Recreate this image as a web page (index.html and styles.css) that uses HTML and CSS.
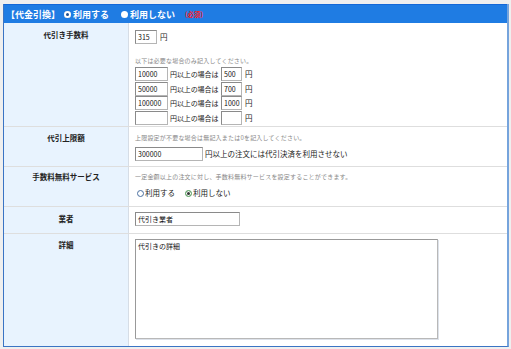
FILE: index.html
```html
<!DOCTYPE html>
<html lang="ja">
<head>
<meta charset="utf-8">
<link rel="stylesheet" href="styles.css">
</head>
<body>
<div class="panel">
  <div class="head">
    <span class="title">【代金引換】</span>
    <span class="hradio on"></span><span class="hopt">利用する</span>
    <span class="hradio"></span><span class="hopt">利用しない</span>
    <span class="req">(必須)</span>
  </div>
  <div class="row r1">
    <div class="label">代引き手数料</div>
    <div class="val">
      <div class="line"><span class="inp w22">315</span><span class="yen">円</span></div>
      <div class="note n1">以下は必要な場合のみ記入してください。</div>
      <div class="tiers">
        <div class="tier"><span class="inp w33">10000</span><span class="mid">円以上の場合は</span><span class="inp w21">500</span><span class="yen">円</span></div>
        <div class="tier"><span class="inp w33">50000</span><span class="mid">円以上の場合は</span><span class="inp w21">700</span><span class="yen">円</span></div>
        <div class="tier"><span class="inp w33">100000</span><span class="mid">円以上の場合は</span><span class="inp w21">1000</span><span class="yen">円</span></div>
        <div class="tier"><span class="inp w33"></span><span class="mid">円以上の場合は</span><span class="inp w21"></span><span class="yen">円</span></div>
      </div>
    </div>
  </div>
  <div class="row r2">
    <div class="label">代引上限額</div>
    <div class="val">
      <div class="note">上限設定が不要な場合は無記入または0を記入してください。</div>
      <div class="line l2"><span class="inp w68">300000</span><span class="txt">円以上の注文には代引決済を利用させない</span></div>
    </div>
  </div>
  <div class="row r3">
    <div class="label">手数料無料サービス</div>
    <div class="val">
      <div class="note">一定金額以上の注文に対し、手数料無料サービスを設定することができます。</div>
      <div class="radios">
        <span class="radio"></span><span class="ropt">利用する</span>
        <span class="radio on"></span><span class="ropt">利用しない</span>
      </div>
    </div>
  </div>
  <div class="row r4">
    <div class="label">業者</div>
    <div class="val">
      <span class="inp w105">代引き業者</span>
    </div>
  </div>
  <div class="row r5">
    <div class="label">詳細</div>
    <div class="val">
      <div class="area">代引きの詳細</div>
    </div>
  </div>
</div>
</body>
</html>
```
FILE: styles.css
```css
body {
  margin: 0;
  background: #efefef;
  font-family: "Noto Sans CJK JP", "Noto Sans", sans-serif;
  color: #222;
}
.panel {
  margin: 4px 0 0 3px;
  width: 503px;
  background: #fff;
  border-left: 1px solid #3a74c4;
  border-bottom: 1px solid #3a74c4;
  border-right: 2px solid #76a4dc;
}
.head {
  height: 18px;
  background: #1f7ce3;
  border-top: 1px solid #1468d8;
  color: #fff;
  font-weight: bold;
  font-size: 9px;
  display: flex;
  align-items: center;
  padding-left: 2px;
}
.title { margin-right: 4px; }
.hradio {
  width: 7px;
  height: 7px;
  border-radius: 50%;
  background: #fff;
  margin-right: 2px;
}
.hradio.on {
  box-shadow: inset 0 0 0 2px #fff, inset 0 0 0 4px #1f4f90;
}
.hopt { margin-right: 12px; }
.req {
  color: #ff1a1a;
  font-size: 6.5px;
  margin-left: -2px;
}
.row {
  display: grid;
  grid-template-columns: 125px 1fr;
}
.row + .row { border-top: 1px solid #dedede; }
.label {
  background: #e8f3fe;
  border-right: 1px solid #d6dde6;
  text-align: center;
  font-weight: bold;
  font-size: 7.5px;
  line-height: 10px;
  color: #222;
}
.val {
  padding-left: 6px;
  font-size: 7.5px;
  line-height: 10px;
}
.r1 { height: 103px; }
.r2 { height: 39px; }
.r3 { height: 39px; }
.r4 { height: 26px; }
.r5 { height: 112px; }
.r1 .label { padding-top: 7px; }
.r1 .val { padding-top: 7px; }
.r2 .label, .r2 .val { padding-top: 6px; }
.r3 .label, .r3 .val { padding-top: 5px; }
.r4 .label { padding-top: 7px; }
.r4 .val { padding-top: 5px; }
.r5 .label { padding-top: 6px; }
.r5 .val { padding-top: 5px; }
.line { display: flex; align-items: center; }
.inp {
  display: inline-block;
  box-sizing: border-box;
  height: 14px;
  line-height: 12px;
  border: 1px solid #b5b5b5;
  border-top-color: #8a8a8a;
  border-left-color: #8a8a8a;
  background: #fff;
  font-size: 7px;
  padding-left: 2px;
  color: #111;
}
.w22 { width: 22px; }
.w33 { width: 33px; }
.w21 { width: 21px; }
.w68 { width: 68px; }
.w105 { width: 105px; }
.yen { margin-left: 3px; font-size: 7.5px; }
.note {
  font-size: 6px;
  color: #888;
  letter-spacing: 0.2px;
  line-height: 10px;
}
.n1 { margin-top: 12px; }
.tiers { margin-top: 1px; }
.tier { display: flex; align-items: center; height: 14.5px; }
.mid { margin-left: 2px; width: 51px; white-space: nowrap; font-size: 7px; letter-spacing: -0.1px; }
.l2 { margin-top: 4px; }
.txt { margin-left: 2px; }
.radios {
  display: flex;
  align-items: center;
  margin-top: 6px;
  padding-left: 2px;
}
.radio {
  width: 7px;
  height: 7px;
  box-sizing: border-box;
  border-radius: 50%;
  border: 1px solid #4a6fa0;
  background: #fff;
  margin-right: 1px;
}
.radio.on {
  border-color: #4b9a55;
  box-shadow: inset 0 0 0 1px #fff, inset 0 0 0 3px #333;
}
.ropt { margin-right: 10px; }
.area {
  box-sizing: border-box;
  width: 303px;
  height: 100px;
  border: 1px solid #b8b8b8;
  border-top-color: #999;
  border-left-color: #999;
  box-shadow: 1px 1px 0 #dde2ea;
  font-size: 7px;
  line-height: 10px;
  padding: 1px 2px;
  color: #111;
}
```
